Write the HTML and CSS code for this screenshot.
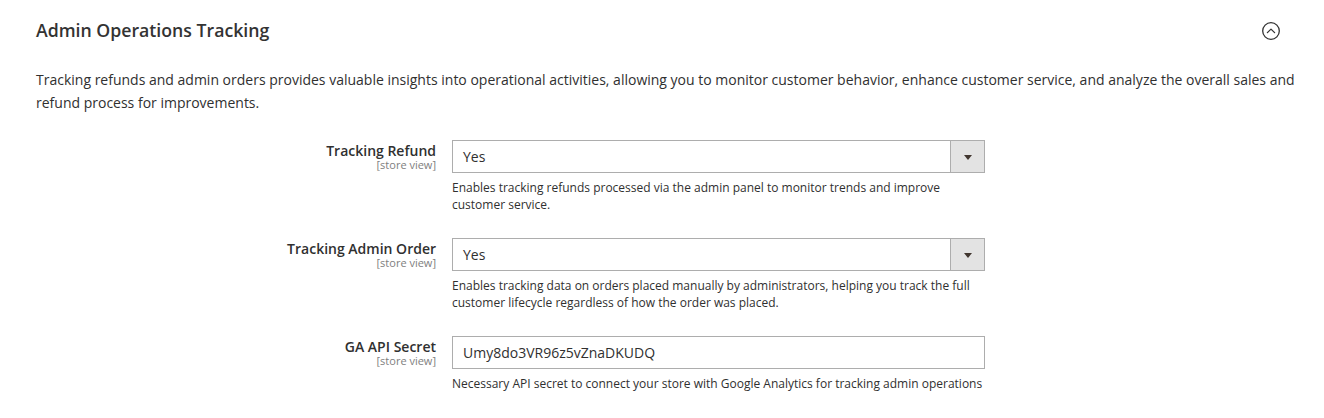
FILE: index.html
```html
<!DOCTYPE html>
<html lang="en">
<head>
<meta charset="utf-8">
<title>Admin Operations Tracking</title>
<link rel="stylesheet" href="styles.css">
</head>
<body>
<section class="section">
  <header class="section-head">
    <h2 class="section-title">Admin Operations Tracking</h2>
    <span class="toggle" aria-label="Collapse">
      <svg width="20" height="20" viewBox="0 0 20 20" aria-hidden="true">
        <circle cx="10" cy="10" r="8.3" fill="none" stroke="#333" stroke-width="1.3"/>
        <path d="M6.4 11.6 L10 8.1 L13.6 11.6" fill="none" stroke="#333" stroke-width="1.3" stroke-linecap="round" stroke-linejoin="round"/>
      </svg>
    </span>
  </header>
  <p class="section-desc">Tracking refunds and admin orders provides valuable insights into operational activities, allowing you to monitor customer behavior, enhance customer service, and analyze the overall sales and refund process for improvements.</p>

  <div class="fields">
    <div class="row">
      <div class="label">
        <span class="label-text">Tracking Refund</span>
        <span class="scope">[store view]</span>
      </div>
      <div class="control">
        <div class="select">
          <span class="select-value">Yes</span>
          <span class="select-btn"><span class="arrow"></span></span>
        </div>
        <p class="note">Enables tracking refunds processed via the admin panel to monitor trends and improve customer service.</p>
      </div>
    </div>

    <div class="row">
      <div class="label">
        <span class="label-text">Tracking Admin Order</span>
        <span class="scope">[store view]</span>
      </div>
      <div class="control">
        <div class="select">
          <span class="select-value">Yes</span>
          <span class="select-btn"><span class="arrow"></span></span>
        </div>
        <p class="note">Enables tracking data on orders placed manually by administrators, helping you track the full customer lifecycle regardless of how the order was placed.</p>
      </div>
    </div>

    <div class="row">
      <div class="label">
        <span class="label-text">GA API Secret</span>
        <span class="scope">[store view]</span>
      </div>
      <div class="control">
        <div class="input">Umy8do3VR96z5vZnaDKUDQ</div>
        <p class="note">Necessary API secret to connect your store with Google Analytics for tracking admin operations</p>
      </div>
    </div>
  </div>
</section>
</body>
</html>
```

FILE: styles.css
```css
* { box-sizing: border-box; }

html, body {
  margin: 0;
  padding: 0;
  background: #ffffff;
}

body {
  font-family: "Open Sans", "Liberation Sans", Arial, sans-serif;
  color: #303030;
  width: 1324px;
  height: 418px;
  overflow: hidden;
}

.section {
  padding: 0 18px 0 36px;
}

.section-head {
  height: 60px;
  display: flex;
  align-items: center;
  justify-content: space-between;
  padding-right: 25px;
}

.section-title {
  margin: 0;
  font-size: 17.7px;
  font-weight: 600;
  line-height: 20px;
  color: #333333;
}

.toggle {
  display: flex;
  width: 20px;
  height: 20px;
  margin-top: 2px;
}

.section-desc {
  margin: 8px 0 0;
  font-size: 14px;
  line-height: 23px;
  color: #303030;
}

.fields {
  margin-top: 26px;
  display: flex;
  flex-direction: column;
  gap: 25px;
}

.row {
  display: grid;
  grid-template-columns: 400px 533px;
  column-gap: 16px;
}

.label {
  display: flex;
  flex-direction: column;
  align-items: flex-end;
  padding-top: 3px;
  text-align: right;
}

.label-text {
  font-size: 14px;
  font-weight: 600;
  line-height: 16px;
  color: #303030;
}

.scope {
  font-size: 11px;
  line-height: 12px;
  color: #808080;
}

.control {
  display: flex;
  flex-direction: column;
}

.select,
.input {
  height: 33px;
  border: 1px solid #adadad;
  background: #ffffff;
  font-size: 14px;
  color: #303030;
}

.select {
  display: flex;
  align-items: stretch;
}

.select-value {
  flex: 1;
  padding-left: 10px;
  line-height: 31px;
}

.select-btn {
  width: 34px;
  background: #e3e3e3;
  border-left: 1px solid #adadad;
  display: flex;
  align-items: center;
  justify-content: center;
}

.arrow {
  width: 0;
  height: 0;
  border-left: 4.5px solid transparent;
  border-right: 4.5px solid transparent;
  border-top: 5px solid #41362f;
  margin-top: 1px;
}

.input {
  padding-left: 10px;
  line-height: 31px;
}

.note {
  margin: 6px 0 0;
  font-size: 12px;
  line-height: 17px;
  color: #303030;
}
```
